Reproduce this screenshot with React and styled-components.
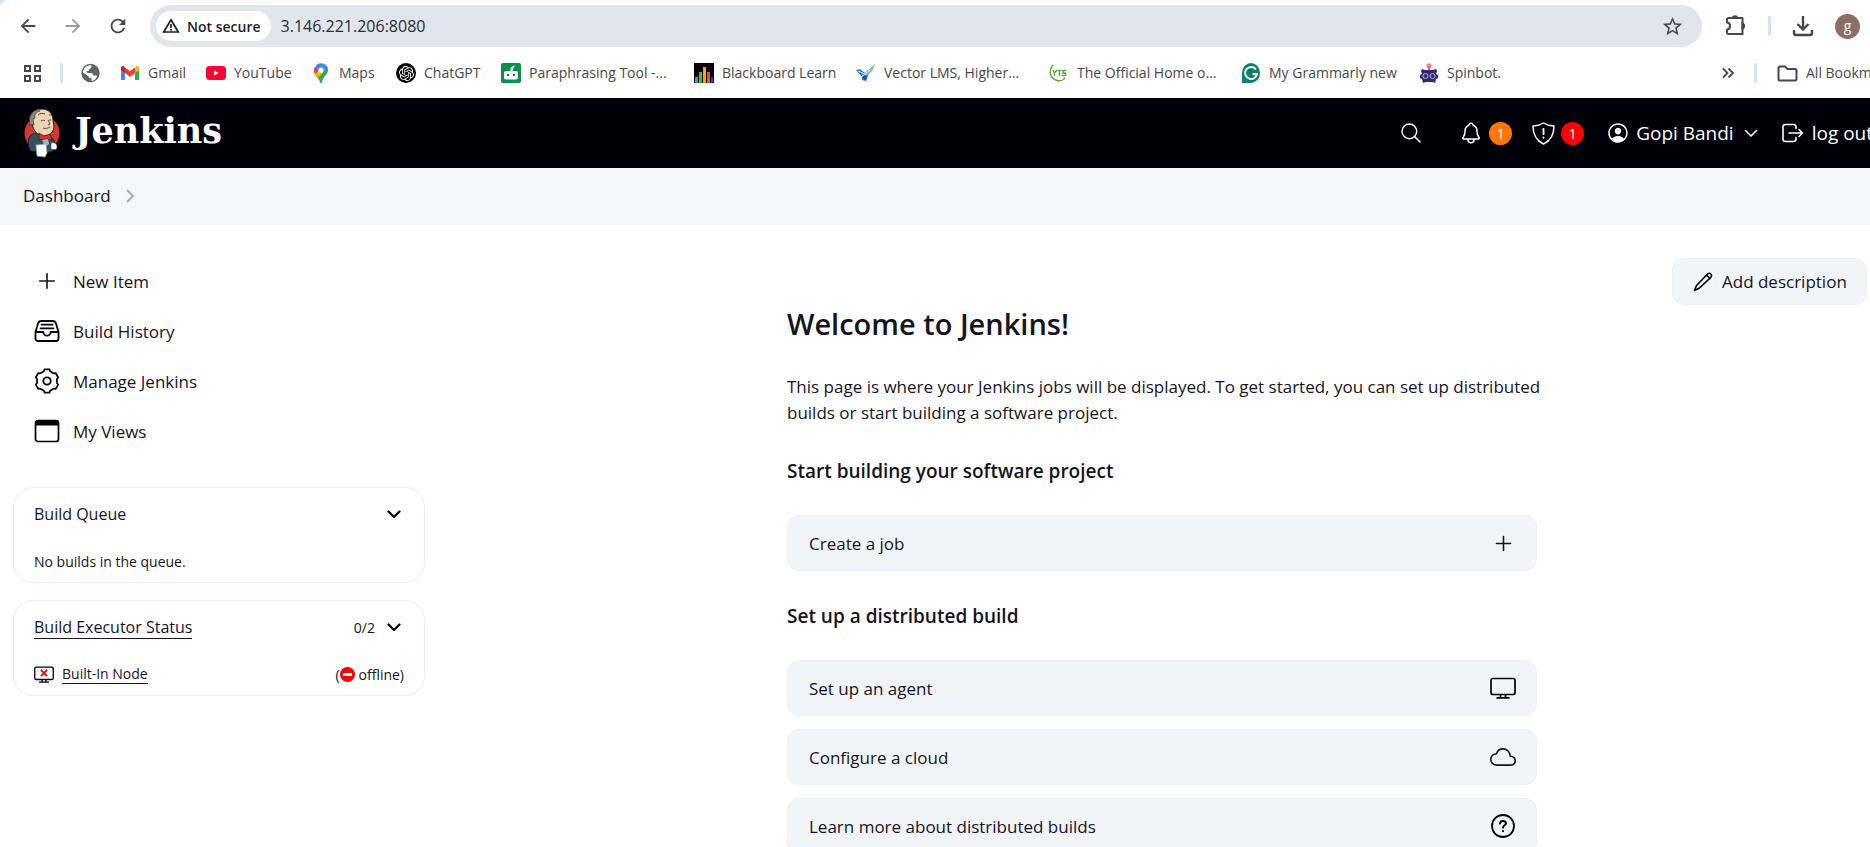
import React from 'react';
import styled, { createGlobalStyle } from 'styled-components';
import { MdArrowBack, MdArrowForward, MdRefresh, MdStarBorder } from 'react-icons/md';
import {
  IoAdd, IoSearchOutline, IoNotificationsOutline, IoPersonCircleOutline, IoCloudOutline,
} from 'react-icons/io5';
import { SiOpenai } from 'react-icons/si';

const GlobalStyle = createGlobalStyle`
  *, *::before, *::after { box-sizing: border-box; }
  html, body { margin: 0; background: #fff; overflow: hidden; }
  body { font-family: "Open Sans", "Noto Sans", sans-serif; font-size: 17px; color: #14141f; }
  a { color: inherit; text-decoration: none; }
  button { font: inherit; color: inherit; background: none; border: 0; padding: 0; cursor: pointer; }
  h1, h2, p { margin: 0; font-weight: 400; }
  svg { display: block; flex: none; }
`;

/* ---------- browser bar ---------- */
const Browser = styled.header`
  background: #d3e3fd;
`;
const BrowserInner = styled.div`
  background: #fff;
  border-top-left-radius: 8px;
  color: #474747;
`;
const NavRow = styled.div`
  display: flex;
  align-items: center;
  height: 52px;
  padding: 0 10px 0 15px;
`;
const NavButton = styled.button`
  display: grid;
  place-items: center;
  width: 45px;
  height: 40px;
  padding-right: 20px;
  opacity: ${(p) => (p.disabled ? 0.55 : 1)};
  color: #474747;
`;
const Omnibox = styled.div`
  flex: 1;
  display: flex;
  align-items: center;
  height: 42px;
  padding: 0 18px 0 6px;
  border-radius: 21px;
  background: #e1e5ed;
`;
const SecurityChip = styled.button`
  display: flex;
  align-items: center;
  gap: 7px;
  height: 30px;
  padding: 0 10px 0 6px;
  border-radius: 15px;
  background: #fff;
  color: #1f1f1f;
  font-size: 14px;
  font-weight: 600;
`;
const Address = styled.input`
  flex: 1;
  min-width: 0;
  margin-left: 10px;
  padding: 0;
  border: 0;
  outline: 0;
  background: none;
  font: inherit;
  font-size: 16px;
  color: #2b2c2f;
`;
const IconButton = styled.button`
  display: grid;
  place-items: center;
  color: ${(p) => (p.$dark ? '#000009' : '#474747')};
`;
const NavTools = styled.div`
  display: flex;
  align-items: center;
  gap: 21px;
  padding-left: 23px;
`;
const Divider = styled.span`
  width: 3px;
  height: 20px;
  border-radius: 2px;
  background: #d3e3fd;
`;
const Avatar = styled.button`
  width: 25px;
  height: 25px;
  border-radius: 50%;
  background: #8d6e63;
  color: #fff;
  font-size: 14px;
  line-height: 22px;
`;
const BookmarkRow = styled.nav`
  display: flex;
  align-items: center;
  height: 46px;
  padding: 0 0 4px 23px;
  font-size: 14px;
`;
const BookmarkLead = styled.div`
  flex: none;
  display: flex;
  align-items: center;
  gap: 18px;
  width: 97px;
`;
const Bookmark = styled.a`
  flex: none;
  display: flex;
  align-items: center;
  gap: 8px;
  width: ${(p) => p.$width}px;
  line-height: 18px;
  white-space: nowrap;
`;
const BookmarkEnd = styled.div`
  flex: none;
  display: flex;
  align-items: center;
  gap: 20px;
  margin: 0 -29px 0 auto;
`;

/* ---------- Jenkins header ---------- */
const PageHeader = styled.header`
  display: flex;
  align-items: center;
  height: 70px;
  padding-left: 23px;
  background: #000009;
  color: #fff;
`;
const Brand = styled.a`
  display: flex;
  align-items: center;
  gap: 14px;
  font-family: "DejaVu Serif", serif;
  font-size: 35px;
  font-weight: 700;
  line-height: 40px;
  & > span { padding-bottom: 4px; }
`;
const HeaderTools = styled.div`
  flex: none;
  display: flex;
  align-items: center;
  margin: 0 -15px 0 auto;
  font-size: 19px;
  font-weight: 500;
  white-space: nowrap;
`;
const HeaderButton = styled.button`
  display: flex;
  align-items: center;
  gap: ${(p) => p.$gap || 6}px;
  height: 48px;
  padding: 0 ${(p) => p.$pad || 10}px;
  margin-right: ${(p) => p.$after || 0}px;
  border-radius: 12px;
`;
const UserName = styled.span`
  padding-right: 4px;
`;
const Count = styled.span`
  display: grid;
  place-items: center;
  width: 23px;
  height: 23px;
  border-radius: 50%;
  background: ${(p) => p.$color};
  font-size: 14px;
  line-height: 23px;
`;
const Breadcrumbs = styled.nav`
  display: flex;
  align-items: center;
  gap: 14px;
  height: 57px;
  padding: 0 0 2px 23px;
  background: #f6f7f9;
`;

/* ---------- body ---------- */
const Page = styled.div`
  display: grid;
  grid-template-columns: 412px minmax(0, 1fr);
  gap: 32px;
  padding: 31px 3px 0 13px;
`;
const Side = styled.aside`
  display: flex;
  flex-direction: column;
  gap: 17px;
`;
const Tasks = styled.nav`
  display: flex;
  flex-direction: column;
  padding-bottom: 14px;
`;
const Task = styled.a`
  display: flex;
  align-items: center;
  gap: 13px;
  height: 50px;
  padding-left: 21px;
`;
const Pane = styled.section`
  display: flex;
  flex-direction: column;
  justify-content: space-between;
  height: 96px;
  padding: 13px 20px 8px 20px;
  border: 1px solid #e8edf5;
  border-radius: 20px;
`;
const PaneRow = styled.div`
  display: flex;
  align-items: center;
  height: 26px;
  font-size: ${(p) => (p.$small ? 14 : 16)}px;
`;
const Grow = styled.span`
  flex: 1;
`;
const Underlined = styled.a`
  border-bottom: 1px solid #14141f;
  line-height: ${(p) => (p.$small ? 19 : 22)}px;
`;
const PaneCount = styled.span`
  font-size: 14px;
  margin-right: 12px;
`;
const Offline = styled.span`
  display: flex;
  align-items: center;
  svg { margin-right: 4px; }
`;
const NodeIcon = styled.span`
  margin-right: 8px;
`;
const Collapse = styled(IconButton)`
  padding-right: 3px;
`;
const Main = styled.main`
  display: flex;
  flex-direction: column;
`;
const AddDescription = styled.button`
  align-self: flex-end;
  display: flex;
  align-items: center;
  gap: 9px;
  height: 47px;
  width: 195px;
  margin-top: 2px;
  padding: 0 20px;
  border: 1px solid #edf0f4;
  border-radius: 12px;
  background: #f2f5f8;
  white-space: nowrap;
`;
const Welcome = styled.div`
  align-self: center;
  width: 100%;
  max-width: 750px;
`;
const Title = styled.h1`
  font-size: 29px;
  line-height: 38px;
  font-weight: 600;
`;
const Intro = styled.p`
  margin: 31px -12px 0 0;
  line-height: 26px;
`;
const Subtitle = styled.h2`
  font-size: 19px;
  line-height: 26px;
  font-weight: 600;
  margin: 32px 0 31px;
`;
const CardList = styled.div`
  display: flex;
  flex-direction: column;
  gap: 13px;
`;
const Card = styled.a`
  display: flex;
  align-items: center;
  justify-content: space-between;
  height: 56px;
  padding: 0 20px 0 21px;
  border: 1px solid #edf0f4;
  border-radius: 12px;
  background: #f2f5f8;
`;

/* ---------- drawings ---------- */
const Butler = () => (
  <svg width="38" height="50" viewBox="0 0 38 50">
    <circle cx="19" cy="25" r="17.500" fill="#d33833" />
    <path d="M7 28c3-3 6-3 8-2l6 3 5-1c4 2 6 5 6 9l-2 6-8 2-14-2C5 39 4 33 7 28z" fill="#335061" stroke="#1a1f24" />
    <path d="M8 14C6 6 11 1 19 1c7 0 11 5 11 11l1 6c0 5-4 10-9 10-6 0-11-4-12-9z" fill="#efd3b5" stroke="#1a1f24" />
    <path d="M7 17C5 9 8 3 16 1l1 2c-4 1-6 4-5 7l-2 1 1 6z" fill="#8b857c" stroke="#38342f" strokeWidth=".7" />
    <path d="M15 7c2-2 5-2 7-1M26 7l3 0M18 13c2-1 3-1 4 0M26 12l2 0M25 12l2 4-2 1M20 20c3 1 5 0 7-1" fill="none" stroke="#4a3d33" strokeWidth=".9" />
    <path d="M16 25l5 3 6-2 2 6-7-1-6 1z" fill="#e2302c" stroke="#1a1f24" strokeWidth=".7" />
    <path d="M19 32l6-1 1 5-4 3z" fill="#9fb6c8" />
    <path d="M13 37l10-1 1 9-2 4-8-1z" fill="#fff" stroke="#99a" strokeWidth=".7" />
    <path d="M28 35c4-1 6 1 6 4s-2 3-6 2z" fill="#fff" stroke="#556" strokeWidth=".7" />
  </svg>
);
const Warning = () => (
  <svg width="18" height="18" viewBox="0 0 18 18" fill="none" stroke="#1f1f1f" strokeWidth="1.7">
    <path d="M9 2.800 16.300 15H1.700z" /><path d="M9 7v4M9 12v1.700" />
  </svg>
);
const Globe = () => (
  <svg width="19" height="20" viewBox="0 0 19 20">
    <circle cx="9.500" cy="10" r="9.200" fill="#5f6368" />
    <path d="M8 2.500c2-.8 3 0 2.500 1.500L8.500 6 8 8H5.500l1 2h4.500l1.500 2.500h3.500c0 3-3 5.300-5.500 5.500V15H8.500L7 13 2 9.500C2 6 4.500 3 8 2.500z" fill="#fff" />
  </svg>
);
const Extension = () => (
  <svg width="22" height="22" viewBox="0 0 22 22" fill="none" stroke="#474747" strokeWidth="2">
    <path d="M3.500 3h14v16h-14q-1.500 0-1.500-1.500v-3q3 0 3-3.500t-3-3.500V4.500Q2 3 3.500 3z" strokeLinejoin="round" />
    <path d="M7.500 3a2.700 2.700 0 0 1 5 0zM17.500 8.500a2.700 2.700 0 0 1 0 5z" fill="#474747" />
  </svg>
);
const Download = () => (
  <svg width="22" height="22" viewBox="0 0 22 22" fill="none" stroke="#474747" strokeWidth="2.400">
    <path d="M11 1v13M5.500 9l5.500 5.500L16.500 9M2 15v3q0 2 2 2h14q2 0 2-2v-3" />
  </svg>
);
const Apps = () => (
  <svg width="19" height="19" viewBox="0 0 19 19" fill="none" stroke="#474747" strokeWidth="2">
    <path d="M2 2h5v5H2zM12 2h5v5h-5zM2 12h5v5H2zM12 12h5v5h-5z" />
  </svg>
);
const Gmail = () => (
  <svg width="20" height="20" viewBox="0 0 20 20">
    <path d="M1 5v12h4V9z" fill="#4285f4" /><path d="M15 9v8h4V5z" fill="#34a853" />
    <path d="M15 4.500V10l4-3V5c0-2-2-2.500-3-1.500z" fill="#fbbc04" />
    <path d="M5 4.500V10L1 7V5c0-2 2-2.500 3-1.500z" fill="#c5221f" />
    <path d="M5 4.500 10 8l5-3.500V10l-5 4-5-4z" fill="#ea4335" />
  </svg>
);
const YouTube = () => (
  <svg width="20" height="20" viewBox="0 0 20 20">
    <rect y="3" width="20" height="14" rx="3.500" fill="#ff0033" /><path d="M8 7.500v5l4.500-2.500z" fill="#fff" />
  </svg>
);
const MapsPin = () => (
  <svg width="20" height="20" viewBox="0 0 20 20">
    <path d="M6 1.500Q10-1 14 1.500L7 9 4 5Q4.500 3 6 1.500z" fill="#4285f4" />
    <path d="M3.500 4 8 7.500 4 12Q2 8 3.500 4z" fill="#ea4335" />
    <path d="M14 1.500Q17 3.500 17 7c0 5-5 6-6 12.500q-1 1-2 0C8.500 16 6 14.500 4.500 12.500z" fill="#34a853" />
    <path d="M14 1.500Q16 3 16.700 5L11 10 8 8z" fill="#4285f4" />
    <path d="M4 12 8 7.500l4 2L6.500 15z" fill="#fbbc04" />
    <circle cx="10" cy="7.200" r="2.600" fill="#fff" />
  </svg>
);
const OpenAiBadge = styled.span`
  display: grid;
  place-items: center;
  width: 20px;
  height: 20px;
  border-radius: 50%;
  background: #000;
  color: #fff;
`;
const Quill = () => (
  <svg width="20" height="20" viewBox="0 0 20 20">
    <rect width="20" height="20" rx="2" fill="#0b8f4d" />
    <rect x="3" y="8" width="14" height="8.500" rx="2" fill="#fff" />
    <path d="M9.500 8q-1-4 4.500-6-2 3-2.500 6z" fill="#fff" />
    <path d="M6 11h2v2H6zM12 11h2v2h-2z" fill="#0b8f4d" />
  </svg>
);
const Bars = () => (
  <svg width="20" height="20" viewBox="0 0 20 20">
    <path d="M0 0h20v20H0z" /><path d="M1 14h3v6H1z" fill="#1da1f2" /><path d="M5 9h3v11H5z" fill="#5fb336" />
    <path d="M9 4h3v16H9z" fill="#f5a800" /><path d="M13 9h3v11h-3z" fill="#f0502d" /><path d="M17 14h2v6h-2z" fill="#5b2a86" />
  </svg>
);
const Vector = () => (
  <svg width="20" height="20" viewBox="0 0 20 20">
    <path d="M0 7l4-1 5 4 3-3 1 3-3 8-4-1v-3z" fill="#2f7fc1" />
    <path d="M9 10 19 1l-3 7-4 4z" fill="#6fc3c9" /><path d="M15 5l4-4-2 5z" fill="#9fcb4a" />
    <path d="M6 14l5-2-1 6z" fill="#174f91" /><path d="M2 8l9 4M5 14l9-7" stroke="#fff" strokeWidth=".8" />
  </svg>
);
const Yts = () => (
  <svg width="20" height="20" viewBox="0 0 20 20" fill="none" stroke="#5ea93a" strokeWidth="1.500">
    <path d="M4 2C-1 8 1 16 8 17.500c4 1 7-1 8-3" />
    <path d="M4 7l1.500 3L8 7M5.500 10v3M8.500 7.500h4M10.500 7.500V13M17 7.500h-3v2.500h2.500v2.500H13" />
  </svg>
);
const Grammarly = () => (
  <svg width="20" height="20" viewBox="0 0 20 20">
    <path d="M1 20V10a9 10 0 1 1 9 10z" fill="#08806b" />
    <path d="M15 6.500A6 6 0 1 0 16 11h-4.500" fill="none" stroke="#fff" strokeWidth="2" />
  </svg>
);
const Spinbot = () => (
  <svg width="20" height="20" viewBox="0 0 20 20">
    <circle cx="10" cy="2.800" r="2.600" fill="#f5869a" /><path d="M9 3h2v4H9z" fill="#e8607a" />
    <path d="M3 6l3 1h8l3-1 1 2-1 3 2 1v3l-2 1-1 4-3-1H7l-3 1-1-4-2-1v-3l2-1-1-3z" fill="#2f2a73" />
    <circle cx="6.500" cy="13" r="2.500" fill="none" stroke="#b9b7e6" /><circle cx="13.500" cy="13" r="2.500" fill="none" stroke="#b9b7e6" />
  </svg>
);
const DoubleChevron = () => (
  <svg width="12" height="12" viewBox="0 0 12 12" fill="none" stroke="#474747" strokeWidth="1.800">
    <path d="M1 1.500 5.500 6 1 10.500M6.500 1.500 11 6 6.500 10.500" />
  </svg>
);
const Folder = () => (
  <svg width="21" height="17" viewBox="0 0 21 17" fill="none" stroke="#474747" strokeWidth="2">
    <path d="M1.500 3q0-1.500 1.500-1.500h5L10.500 4H18q1.500 0 1.500 1.500V14q0 1.500-1.500 1.500H3Q1.500 15.500 1.500 14z" />
  </svg>
);
const Shield = () => (
  <svg width="23" height="23" viewBox="0 0 23 23" fill="none" stroke="#fff" strokeWidth="1.500" strokeLinecap="round" strokeLinejoin="round">
    <path d="M11.500 1C8.500 3 5 3.800 1 4c0 8.500 3 14.500 10.500 18C19 18.500 22 12.500 22 4c-4-.2-7.500-1-10.500-3z" />
    <path d="M11.500 7v5M11.500 15.500v.2" strokeWidth="1.900" />
  </svg>
);
const LogOut = () => (
  <svg width="22" height="20" viewBox="0 0 22 20" fill="none" stroke="#fff" strokeWidth="1.600" strokeLinecap="round" strokeLinejoin="round">
    <path d="M14 5.500V4q0-2.500-2.500-2.500h-8Q1 1.500 1 4v12q0 2.500 2.500 2.500h8Q14 18.500 14 16v-1.500M7 10h13.500M17 6.500l3.500 3.500-3.500 3.500" />
  </svg>
);
const Tray = () => (
  <svg width="26" height="24" viewBox="0 0 26 24" fill="none" stroke="#000009" strokeWidth="1.800" strokeLinecap="round" strokeLinejoin="round">
    <path d="M1.500 13 4 4.500Q4.800 2 7.300 2h11.400Q21.200 2 22 4.500L24.500 13v6.500q0 2.500-2.500 2.500H4q-2.500 0-2.500-2.500zM1.500 13h7.800q.5 3.700 3.700 3.700t3.700-3.700h7.800M7.500 5.700h11M6.500 9.300h13" />
  </svg>
);
const gearPoint = (degrees, radius) => {
  const a = (degrees * Math.PI) / 180;
  return `${(13 + radius * Math.cos(a)).toFixed(2)} ${(13 + radius * Math.sin(a)).toFixed(2)}`;
};
const gearPath = [0, 1, 2, 3, 4, 5].map((i) => {
  const t = i * 60 - 90;
  return `${i ? 'L' : 'M'}${gearPoint(t - 12, 11.8)}L${gearPoint(t + 12, 11.8)}Q${gearPoint(t + 18, 9.6)} ${gearPoint(t + 25, 10)}`
    + `L${gearPoint(t + 35, 10)}Q${gearPoint(t + 42, 9.6)} ${gearPoint(t + 48, 11.8)}`;
}).join('');
const Gear = () => (
  <svg width="26" height="26" viewBox="0 0 26 26" fill="none" stroke="#000009" strokeWidth="1.800" strokeLinejoin="round">
    <path d={`${gearPath}Z`} /><circle cx="13" cy="13" r="3.700" />
  </svg>
);
const WindowIcon = () => (
  <svg width="26" height="24" viewBox="0 0 26 24" fill="none" stroke="#000009" strokeWidth="1.700">
    <rect x="1.500" y="1.500" width="23" height="21" rx="2.500" /><path d="M2 2h22v4H2z" fill="#000009" strokeWidth="1" />
  </svg>
);
const Pencil = () => (
  <svg width="20" height="20" viewBox="0 0 20 20" fill="none" stroke="#000009" strokeWidth="1.600" strokeLinejoin="round" strokeLinecap="round">
    <path d="M14.500 2q1.800-1.500 3.300 0t0 3.300L6.500 16 1.500 18.500 3.500 13.500zM13.500 3l3.500 3.500" />
  </svg>
);
const Monitor = ({ width = 26, failed }) => (
  <svg width={width} height={Math.round(width * 0.85)} viewBox="0 0 26 22" fill="none" stroke="#000009" strokeWidth="1.700" strokeLinejoin="round">
    <rect x="1" y="1.500" width="24" height="16" rx="2" /><path d="M10.500 18v2.500M15.500 18v2.500M6.500 20.800h13" />
    {failed && <path d="M9 5l8 8M17 5l-8 8" stroke="#e60000" strokeWidth="2.300" />}
  </svg>
);
const Help = () => (
  <svg width="26" height="26" viewBox="0 0 26 26" fill="none" stroke="#000009" strokeWidth="1.800" strokeLinecap="round">
    <circle cx="13" cy="13" r="11" /><path d="M10 10.500q.3-2.500 3-2.500t3 2.300c0 2-2.800 2-3 4.400M13 18v.2" strokeWidth="2" />
  </svg>
);
const NoEntry = () => (
  <svg width="15" height="15" viewBox="0 0 15 15"><circle cx="7.500" cy="7.500" r="7.500" fill="#f00" /><path d="M3 6h9v3H3z" fill="#fff" /></svg>
);
const Crumb = () => (
  <svg width="10" height="14" viewBox="0 0 10 14" fill="none" stroke="#9aaed0" strokeWidth="2"><path d="M2 1l6 6-6 6" /></svg>
);
const Chevron = ({ thin }) => (
  <svg width="14" height="9" viewBox="0 0 14 9" fill="none" stroke="currentColor" strokeWidth={thin ? 1.6 : 2.2} strokeLinecap="round" strokeLinejoin="round">
    <path d="M1.500 1.500 7 7l5.500-5.500" />
  </svg>
);

const bookmarks = [
  { label: 'Gmail', width: 86, icon: <Gmail /> },
  { label: 'YouTube', width: 105, icon: <YouTube /> },
  { label: 'Maps', width: 85, icon: <MapsPin /> },
  { label: 'ChatGPT', width: 105, icon: <OpenAiBadge><SiOpenai size={15} /></OpenAiBadge> },
  { label: 'Paraphrasing Tool -...', width: 193, icon: <Quill /> },
  { label: 'Blackboard Learn', width: 162, icon: <Bars /> },
  { label: 'Vector LMS, Higher...', width: 193, icon: <Vector /> },
  { label: 'The Official Home o...', width: 192, icon: <Yts /> },
  { label: 'My Grammarly new', width: 178, icon: <Grammarly /> },
  { label: 'Spinbot.', width: 86, icon: <Spinbot /> },
];
const tasks = [
  { label: 'New Item', icon: <IoAdd size={26} /> },
  { label: 'Build History', icon: <Tray /> },
  { label: 'Manage Jenkins', icon: <Gear /> },
  { label: 'My Views', icon: <WindowIcon /> },
];
const buildCards = [
  { label: 'Set up an agent', icon: <Monitor /> },
  { label: 'Configure a cloud', icon: <IoCloudOutline size={26} /> },
  { label: 'Learn more about distributed builds', icon: <Help /> },
];

export default function App() {
  return (
    <>
      <GlobalStyle />
      <Browser>
        <BrowserInner>
          <NavRow>
            <NavButton aria-label="Back"><MdArrowBack size={22} /></NavButton>
            <NavButton aria-label="Forward" disabled><MdArrowForward size={22} /></NavButton>
            <NavButton aria-label="Reload"><MdRefresh size={22} /></NavButton>
            <Omnibox>
              <SecurityChip><Warning />Not secure</SecurityChip>
              <Address aria-label="Address" defaultValue="3.146.221.206:8080" />
              <IconButton aria-label="Bookmark this page"><MdStarBorder size={23} /></IconButton>
            </Omnibox>
            <NavTools>
              <IconButton aria-label="Extensions"><Extension /></IconButton>
              <Divider />
              <IconButton aria-label="Downloads"><Download /></IconButton>
              <Avatar aria-label="Profile">g</Avatar>
            </NavTools>
          </NavRow>
          <BookmarkRow aria-label="Bookmarks">
            <BookmarkLead>
              <IconButton aria-label="Apps"><Apps /></IconButton>
              <Divider />
              <a href="#web" aria-label="Web page"><Globe /></a>
            </BookmarkLead>
            {bookmarks.map((b) => (
              <Bookmark key={b.label} href="#bookmark" $width={b.width}>{b.icon}{b.label}</Bookmark>
            ))}
            <BookmarkEnd>
              <IconButton aria-label="More bookmarks"><DoubleChevron /></IconButton>
              <Divider />
              <Bookmark as="button" $width={122}><Folder />All Bookmarks</Bookmark>
            </BookmarkEnd>
          </BookmarkRow>
        </BrowserInner>
      </Browser>

      <PageHeader>
        <Brand href="#home"><Butler /><span>Jenkins</span></Brand>
        <HeaderTools>
          <HeaderButton $after={16} aria-label="Search"><IoSearchOutline size={24} /></HeaderButton>
          <HeaderButton aria-label="Notifications"><IoNotificationsOutline size={24} /><Count $color="#ff7700">1</Count></HeaderButton>
          <HeaderButton aria-label="Security warnings"><Shield /><Count $color="#ff0000">1</Count></HeaderButton>
          <HeaderButton $pad={12}><IoPersonCircleOutline size={24} /><UserName>Gopi Bandi</UserName><Chevron thin /></HeaderButton>
          <HeaderButton $pad={12} $gap={8}><LogOut />log out</HeaderButton>
        </HeaderTools>
      </PageHeader>

      <Breadcrumbs aria-label="Breadcrumbs"><a href="#dashboard">Dashboard</a><Crumb /></Breadcrumbs>

      <Page>
        <Side>
          <Tasks>
            {tasks.map((t) => <Task key={t.label} href="#task">{t.icon}{t.label}</Task>)}
          </Tasks>
          <Pane>
            <PaneRow>Build Queue<Grow /><Collapse $dark aria-label="Collapse build queue"><Chevron /></Collapse></PaneRow>
            <PaneRow $small>No builds in the queue.</PaneRow>
          </Pane>
          <Pane>
            <PaneRow>
              <Underlined href="#executors">Build Executor Status</Underlined><Grow />
              <PaneCount>0/2</PaneCount>
              <Collapse $dark aria-label="Collapse executors"><Chevron /></Collapse>
            </PaneRow>
            <PaneRow $small>
              <NodeIcon><Monitor width={20} failed /></NodeIcon>
              <Underlined $small href="#node">Built-In Node</Underlined><Grow />
              <Offline>(<NoEntry />offline)</Offline>
            </PaneRow>
          </Pane>
        </Side>
        <Main>
          <AddDescription><Pencil />Add description</AddDescription>
          <Welcome>
            <Title>Welcome to Jenkins!</Title>
            <Intro>
              This page is where your Jenkins jobs will be displayed. To get started, you can set up distributed
              builds or start building a software project.
            </Intro>
            <Subtitle>Start building your software project</Subtitle>
            <Card href="#job">Create a job<IoAdd size={25} /></Card>
            <Subtitle>Set up a distributed build</Subtitle>
            <CardList>
              {buildCards.map((c) => <Card key={c.label} href="#build">{c.label}{c.icon}</Card>)}
            </CardList>
          </Welcome>
        </Main>
      </Page>
    </>
  );
}
